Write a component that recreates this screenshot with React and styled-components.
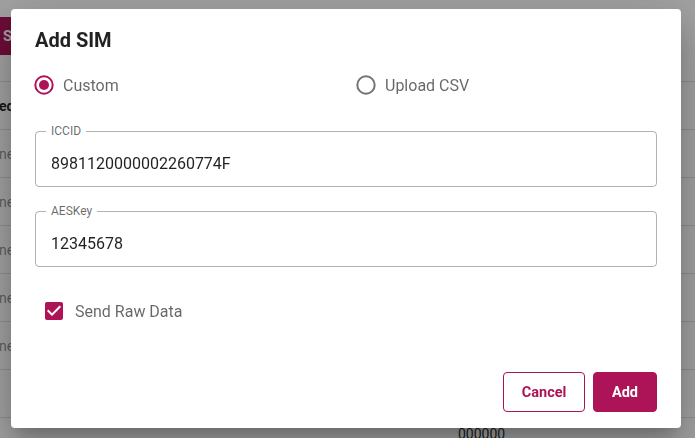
import styled, { createGlobalStyle } from 'styled-components'

const primary = '#ad1457'

const GlobalStyle = createGlobalStyle`
  body {
    margin: 0;
    font-family: Roboto, "Liberation Sans", sans-serif;
    background: #ffffff;
    overflow: hidden;
  }
`

const Page = styled.div`
  padding-top: 17px;
  width: 695px;
  height: 438px;
  overflow: hidden;
`

const TopButton = styled.button`
  height: 38px;
  width: 60px;
  padding: 0 0 0 3px;
  text-align: left;
  border: none;
  border-radius: 0 4px 4px 0;
  background: ${primary};
  color: #ffffff;
  font-family: Roboto, sans-serif;
  font-size: 15px;
  font-weight: 700;
`

const Table = styled.div`
  margin-top: 26px;
  border-top: 1px solid #e0e0e0;
`

const Row = styled.div`
  height: 47px;
  display: flex;
  align-items: center;
  border-bottom: 1px solid #e0e0e0;
  font-size: 14px;
  font-weight: ${(p) => (p.$head ? 700 : 400)};
  color: ${(p) => (p.$head ? 'rgba(0, 0, 0, 0.87)' : 'rgba(0, 0, 0, 0.45)')};
  white-space: nowrap;
  overflow: hidden;
`

const Cell = styled.div`
  width: ${(p) => p.$w}px;
  margin-left: ${(p) => p.$shift || 0}px;
  flex: none;
`

const FooterRow = styled.div`
  padding: 8px 0 0 458px;
  font-size: 14px;
  color: rgba(0, 0, 0, 0.87);
`

const Backdrop = styled.div`
  position: fixed;
  inset: 0;
  background: rgba(0, 0, 0, 0.37);
  padding: 9px 0 0 11px;
`

const Dialog = styled.div`
  width: 670px;
  height: 419px;
  box-sizing: border-box;
  background: #ffffff;
  border-radius: 4px;
  box-shadow: 0 11px 15px -7px rgba(0, 0, 0, 0.2), 0 24px 38px 3px rgba(0, 0, 0, 0.14),
    0 9px 46px 8px rgba(0, 0, 0, 0.12);
  padding: 0 24px;
  display: flex;
  flex-direction: column;
`

const Title = styled.h2`
  margin: 0;
  padding-top: 15px;
  font-size: 20px;
  font-weight: 700;
  line-height: 32px;
  color: rgba(0, 0, 0, 0.87);
`

const RadioRow = styled.div`
  margin-top: 8px;
  display: grid;
  grid-template-columns: 322px 1fr;
  height: 42px;
  align-items: center;
`

const Choice = styled.label`
  display: flex;
  align-items: center;
  gap: 7px;
  margin-left: -3px;
  font-size: 16px;
  color: rgba(0, 0, 0, 0.6);
`

const Field = styled.div`
  position: relative;
  margin-top: ${(p) => p.$top}px;
  height: 56px;
  box-sizing: border-box;
  border: 1px solid rgba(0, 0, 0, 0.3);
  border-radius: 4px;
  display: flex;
  align-items: center;
  padding: 8px 14px 0 15px;
  font-size: 16px;
  color: rgba(0, 0, 0, 0.87);
`

const FieldLabel = styled.span`
  position: absolute;
  top: -8px;
  left: 10px;
  padding: 0 5px;
  background: #ffffff;
  font-size: 12px;
  line-height: 14px;
  color: rgba(0, 0, 0, 0.6);
`

const CheckRow = styled.label`
  margin-top: 23px;
  height: 42px;
  padding-left: 7px;
  display: flex;
  align-items: center;
  gap: 9px;
  font-size: 16px;
  color: rgba(0, 0, 0, 0.6);
`

const Actions = styled.div`
  margin-top: 40px;
  display: flex;
  justify-content: flex-end;
  gap: 8px;
`

const Button = styled.button`
  height: 40px;
  box-sizing: border-box;
  padding: 0 ${(p) => (p.$outlined ? 17.5 : 18)}px;
  border-radius: 4px;
  border: 1px solid ${primary};
  background: ${(p) => (p.$outlined ? '#ffffff' : primary)};
  color: ${(p) => (p.$outlined ? primary : '#ffffff')};
  font-family: Roboto, sans-serif;
  font-size: 14.5px;
  font-weight: 700;
`

function RadioIcon({ checked }) {
  return (
    <svg width="24" height="24" viewBox="0 0 24 24">
      <circle cx="12" cy="12" r="8.7" fill="none" stroke={checked ? primary : 'rgba(0,0,0,0.55)'} strokeWidth="2" />
      {checked && <circle cx="12" cy="12" r="5" fill={primary} />}
    </svg>
  )
}

function CheckedIcon() {
  return (
    <svg width="24" height="24" viewBox="0 0 24 24">
      <path
        fill={primary}
        d="M19 3H5c-1.11 0-2 .9-2 2v14c0 1.1.89 2 2 2h14c1.11 0 2-.9 2-2V5c0-1.1-.89-2-2-2zm-9 14l-5-5 1.41-1.41L10 14.170l7.59-7.59L19 8l-9 9z"
      />
    </svg>
  )
}

export default function App() {
  const rows = ['ne', 'ne', 'ne', 'ne', 'ne', '']
  return (
    <>
      <GlobalStyle />
      <Page>
        <TopButton>S</TopButton>
        <Table>
          <Row $head>
            <Cell $w={200} $shift={-1}>ec</Cell>
          </Row>
          {rows.map((r, i) => (
            <Row key={i}>
              <Cell $w={200} $shift={-1}>{r}</Cell>
            </Row>
          ))}
        </Table>
        <FooterRow>000000</FooterRow>
      </Page>
      <Backdrop>
        <Dialog>
          <Title>Add SIM</Title>
          <RadioRow>
            <Choice>
              <RadioIcon checked />
              Custom
            </Choice>
            <Choice>
              <RadioIcon />
              Upload CSV
            </Choice>
          </RadioRow>
          <Field $top={25}>
            <FieldLabel>ICCID</FieldLabel>
            8981120000002260774F
          </Field>
          <Field $top={24}>
            <FieldLabel>AESKey</FieldLabel>
            12345678
          </Field>
          <CheckRow>
            <CheckedIcon />
            Send Raw Data
          </CheckRow>
          <Actions>
            <Button $outlined>Cancel</Button>
            <Button>Add</Button>
          </Actions>
        </Dialog>
      </Backdrop>
    </>
  )
}
